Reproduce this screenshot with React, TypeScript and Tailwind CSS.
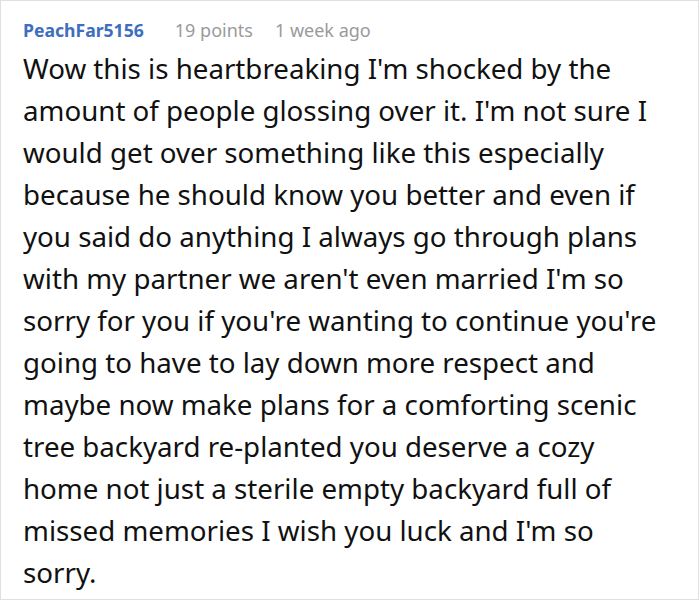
const lines = [
  "Wow this is heartbreaking I'm shocked by the",
  "amount of people glossing over it. I'm not sure I",
  "would get over something like this especially",
  "because he should know you better and even if",
  "you said do anything I always go through plans",
  "with my partner we aren't even married I'm so",
  "sorry for you if you're wanting to continue you're",
  "going to have to lay down more respect and",
  "maybe now make plans for a comforting scenic",
  "tree backyard re-planted you deserve a cozy",
  "home not just a sterile empty backyard full of",
  "missed memories I wish you luck and I'm so",
  "sorry.",
];

export default function App() {
  return (
    <div className="bg-white font-['Noto_Sans',sans-serif]">
      <div className="h-[600px] w-[699px] border border-[#e0e0e0] pl-[22px] pt-[17px]">
        <div className="flex items-baseline text-[18px] leading-[24px]">
          <span className="text-[17.6px] font-bold text-[#3d6ec0]">PeachFar5156</span>
          <span className="ml-[31px] text-[#9a9a9a]">19 points</span>
          <span className="ml-[22px] text-[#9a9a9a]">1 week ago</span>
        </div>
        <div className="mt-[5px] text-[27.7px] leading-[42px] text-[#111]">
          {lines.map((line) => (
            <div key={line} className="whitespace-nowrap">
              {line}
            </div>
          ))}
        </div>
      </div>
    </div>
  );
}
